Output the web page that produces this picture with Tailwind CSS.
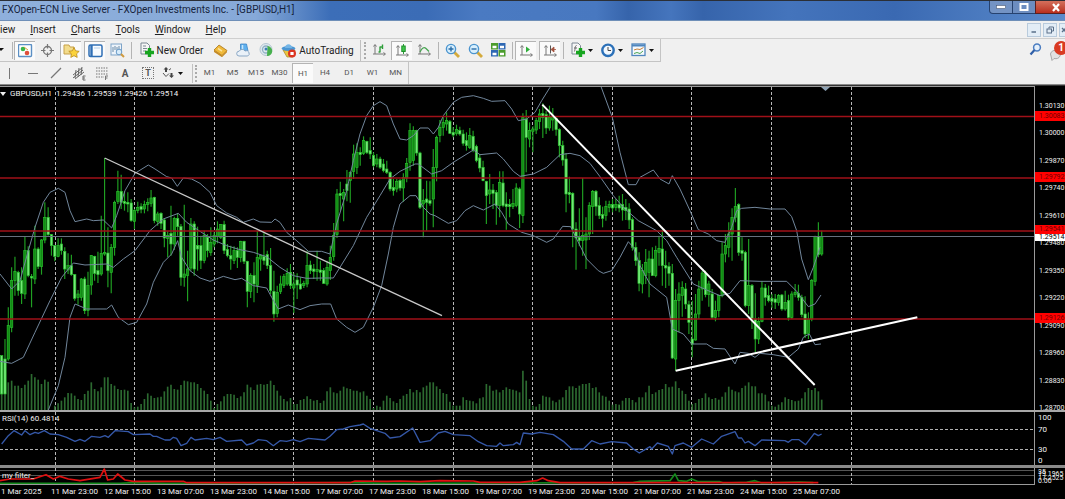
<!DOCTYPE html>
<html lang="en">
<head>
  <meta charset="UTF-8" />
  <meta name="viewport" content="width=device-width, initial-scale=1.0" />
  <title>FXOpen-ECN Live Server - [GBPUSD,H1]</title>
  <script src="https://cdn.jsdelivr.net/npm/@tailwindcss/browser@4"></script>
  <style>
    body { font-family: Roboto, "Noto Sans", sans-serif; }
    .tb > button { display: flex; align-items: center; justify-content: center; flex-shrink: 0; }
    .on { background: #fafafa; border-top: 1px solid #b4b4b4; border-left: 1px solid #b4b4b4; }
  </style>
</head>
<body class="bg-black text-[#222] h-screen flex flex-col overflow-hidden">

  <!-- title bar -->
  <header class="h-[21px] shrink-0 flex justify-between border-t border-[#2b2f36] border-b border-b-[#6f8fb8] bg-[linear-gradient(90deg,#8fb0dc_0,#86a9d8_24%,#3c6eb8_31%,#3b6cb6_40%,#4a7ac2_45%,#4878c0_56%,#3664ab_59%,#4575bd_63%,#3664ab_66%,#4474bc_74%,#3a69b2_84%,#5b8bcc_100%)]">
    <h1 class="text-[10px] leading-[17px] pl-0.5 whitespace-nowrap text-[#16243c]">FXOpen-ECN Live Server - FXOpen Investments Inc. - [GBPUSD,H1]</h1>
    <div class="flex h-[13px] shrink-0">
      <button aria-label="Minimize" class="w-6 border border-t-0 border-[#26426f] rounded-bl bg-[#7393c4] flex items-center justify-center"><svg width="10" height="5"><rect x=".5" y=".5" width="9" height="3" fill="#fff" stroke="#4b5a75" stroke-width=".6"/></svg></button>
      <button aria-label="Maximize" class="w-[22px] border-b border-[#26426f] bg-[#6c8dc0] flex items-center justify-center"><svg width="10" height="9"><rect x="1.5" y="1" width="7" height="6" fill="none" stroke="#fff" stroke-width="2"/></svg></button>
      <button aria-label="Close" class="w-[30px] border-l border-b border-[#5a2020] bg-linear-to-b from-[#d4705c] to-[#b82c1c] flex items-center justify-center pl-2.5"><svg width="10" height="9"><path d="M2 1l6 7M8 1L2 8" stroke="#fff" stroke-width="2.2"/></svg></button>
    </div>
  </header>

  <!-- menu -->
  <nav class="h-[18px] shrink-0 bg-[#f1f1f1] border-b border-[#cfcfcf] flex justify-between text-[10px] leading-[18px]">
    <div class="flex gap-[15px]">
      <a href="#">iew</a>
      <a href="#"><u>I</u>nsert</a>
      <a href="#"><u>C</u>harts</a>
      <a href="#"><u>T</u>ools</a>
      <a href="#"><u>W</u>indow</a>
      <a href="#"><u>H</u>elp</a>
    </div>
    <div class="flex gap-0.5 pt-0.5">
      <button aria-label="Minimize chart" class="w-3.5 h-3.5 border border-[#b9cbdc] bg-[#e3edf6] flex items-center justify-center"><svg width="8" height="8"><path d="M1.500 6h4.500" stroke="#5a6f88" stroke-width="1.5"/></svg></button>
      <button aria-label="Restore chart" class="w-3.5 h-3.5 border border-[#b9cbdc] bg-[#e3edf6] flex items-center justify-center"><svg width="8" height="8" fill="none" stroke="#5a6f88"><path d="M3 2.500V1h4.500v4H6"/><rect x="1" y="3" width="4.500" height="4"/></svg></button>
      <button aria-label="Close chart" class="w-1.5 h-3.5 border border-r-0 border-[#b9cbdc] bg-[#e3edf6] flex items-center"><svg width="5" height="8"><path d="M2 2l4 4M6 2L2 6" stroke="#5a6f88" stroke-width="1.300"/></svg></button>
    </div>
  </nav>

  <!-- toolbars -->
  <div class="shrink-0 bg-[#f0f0f0] border-b border-[#8a8a8a] flex justify-between">
    <div>
      <div class="tb h-[23px] flex items-center w-[661px] border-r border-b border-[#c4c4c4] text-[10px]">
        <svg class="shrink-0" width="11" height="6"><path d="M-2 1h6L1 4z" fill="#111"/></svg>
        <i class="w-px h-[17px] bg-[#b4b4b4] mx-px"></i>
        <button aria-label="Market Watch" class="on w-[21px] h-[19px]"><svg width="15" height="14"><rect x=".5" y=".5" width="13" height="12" rx="1" fill="#fff" stroke="#5b8fc4" stroke-width="1.400"/><circle cx="5" cy="5" r="2.300" fill="#3bb54a"/><circle cx="9" cy="9" r="2.300" fill="#e0503a"/><path d="M6 3l4 3" stroke="#d9a23a"/></svg></button>
        <button aria-label="Crosshair" class="w-[25px] h-[19px]"><svg width="15" height="15" fill="none" stroke="#777"><circle cx="7.500" cy="7.500" r="4" stroke-width="1.300"/><path d="M7.500 1v4.500M7.500 9.500V14M1 7.500h4.500M9.500 7.500H14" stroke-width="1.200"/></svg></button>
        <button aria-label="Navigator" class="on w-[21px] h-[19px]"><svg width="17" height="16"><path d="M1 3V2h5l1 2h4v7H1z" fill="#f3dc8c" stroke="#c7a14a"/><path d="M11 4.500l1.600 3.300 3.600.5-2.600 2.500.6 3.600L11 12.700l-3.200 1.700.6-3.600L5.800 8.300l3.600-.5z" fill="#fbd33c" stroke="#b98a1e" stroke-width=".8"/></svg></button>
        <button aria-label="Terminal" class="on w-[21px] h-[19px] ml-[3px]"><svg width="15" height="14"><rect x="1" y="1" width="13" height="11.500" rx="1.500" fill="#f7fbff" stroke="#2f6fb5" stroke-width="1.500"/><path d="M3.500 1v11.500" stroke="#2f6fb5" stroke-width="2.400"/><path d="M6 4h6" stroke="#b8cfe6"/></svg></button>
        <button aria-label="Strategy Tester" class="w-[25px] h-[19px]"><svg width="15" height="15" fill="none"><rect x="1" y="1" width="10.500" height="11" fill="#eef4fa" stroke="#7ea4c8"/><path d="M3 9V4M5 7V3M7 9V4M9 7V3" stroke="#6b8ba8"/><circle cx="9" cy="9" r="2.800" fill="#d7ecfb" stroke="#6b9cc9"/><path d="M11 11l3 3" stroke="#d09a3e" stroke-width="2"/></svg></button>
        <i class="w-px h-[17px] bg-[#b4b4b4] mx-px"></i>
        <button class="w-[76px] h-[19px] gap-0.5 whitespace-nowrap"><svg class="shrink-0" width="16" height="16"><path d="M2 1h6l2.500 2.500V12H2z" fill="#f6f6f6" stroke="#7d8894"/><path d="M4 4h3M4 6.500h4M4 9h3" stroke="#7d8894"/><path d="M10.500 6v9M6 10.500h9" stroke="#17a51f" stroke-width="3.400"/></svg>New Order</button>
        <button aria-label="MetaEditor" class="w-[23px] h-[19px]"><svg width="15" height="14"><path d="M1 7l5-5 8 5.500-5 5z" fill="#f0b93a" stroke="#a8751c" stroke-width=".8"/><path d="M1 7v2l8 5.200 5-5V7.500l-5 5z" fill="#c58a24"/><path d="M5 5.500l4 2.600" stroke="#fbe39a" stroke-width="1.500"/></svg></button>
        <button aria-label="MQL Community" class="w-[23px] h-[19px]"><svg width="15" height="14"><path d="M4.500 1h6l1.500 7H4.500z" fill="#5fb0ee" stroke="#3d84c4" stroke-width=".8"/><path d="M6.500 2v5" stroke="#c7e6fb" stroke-width="1.500"/><path d="M3 13a2.400 2.400 0 01.2-4.800A3.300 3.300 0 019 8a2.600 2.600 0 012.700 5z" fill="#eaf1f8" stroke="#7f9fc0" stroke-width=".9"/></svg></button>
        <button aria-label="Signals" class="w-[23px] h-[19px]"><svg width="15" height="14" fill="none"><circle cx="7" cy="6.500" r="6" fill="#dfe9ef" stroke="#b4c6d2"/><circle cx="7" cy="6.500" r="3.500" stroke="#8fb0c5" stroke-width="1.300"/><path d="M8.500 3A5 5 0 018 13z" fill="#47b04e"/><circle cx="7" cy="6" r="1.500" fill="#3b7fb5"/></svg></button>
        <button class="w-[79px] h-[19px] gap-0.5 whitespace-nowrap"><svg class="shrink-0" width="16" height="15"><path d="M2 7l4 7h6l2-7z" fill="#e9c440" stroke="#a78423" stroke-width=".7"/><ellipse cx="7.500" cy="5.500" rx="6.800" ry="2.500" fill="#4b97d4"/><path d="M4 5c0-5 7-5 7 0z" fill="#74b5e6"/><circle cx="11" cy="10.500" r="4" fill="#dc3420"/><rect x="9.400" y="9" width="3.200" height="3" fill="#fff"/></svg>AutoTrading</button>
        <i class="w-px h-[21px] bg-[#c0c0c0] ml-[3px]"></i>
        <i class="h-[17px] border-l-2 border-dotted border-[#aaa] ml-[3px] mr-0.5"></i>
        <button aria-label="Bar Chart" class="w-[23px] h-[19px]"><svg width="15" height="14" fill="none" stroke="#777"><path d="M3 2v9M1 11h12M1.500 3.500L3 1.500l1.500 2M11.500 9.500l2 1.500-2 1.500"/><path d="M8 3.500v6M6.500 9H8M8 4h3M10.500 1.500V6" stroke="#2e9e3a" stroke-width="1.400"/></svg></button>
        <button aria-label="Candlesticks" class="on w-[21px] h-[19px]"><svg width="15" height="14" fill="none" stroke="#777"><path d="M3 2v9M1 11h12M1.500 3.500L3 1.500l1.500 2M11.500 9.500l2 1.500-2 1.500"/><path d="M8.500 0v10" stroke="#2e9e3a"/><rect x="6.800" y="2" width="3.400" height="5.500" fill="#3fc64b" stroke="#1f8f2b"/></svg></button>
        <button aria-label="Line Chart" class="w-[25px] h-[19px]"><svg width="15" height="14" fill="none" stroke="#777"><path d="M3 2v9M1 11h12M1.500 3.500L3 1.500l1.500 2M11.500 9.500l2 1.500-2 1.500"/><path d="M3 9c2-4 4-5.500 6-3.500l3 3" stroke="#4aa553" stroke-width="1.300"/></svg></button>
        <i class="w-px h-[17px] bg-[#b4b4b4] mx-px"></i>
        <button aria-label="Zoom In" class="w-6 h-[19px]"><svg width="15" height="15" fill="none"><path d="M9 9l5 5" stroke="#d4aa3c" stroke-width="2.800"/><circle cx="6" cy="6" r="4.600" fill="#d8effd" stroke="#4a94cf" stroke-width="1.400"/><path d="M6 3.500v5M3.500 6h5" stroke="#2a6ea8" stroke-width="1.400"/></svg></button>
        <button aria-label="Zoom Out" class="w-[23px] h-[19px]"><svg width="15" height="15" fill="none"><path d="M9 9l5 5" stroke="#d4aa3c" stroke-width="2.800"/><circle cx="6" cy="6" r="4.600" fill="#d8effd" stroke="#4a94cf" stroke-width="1.400"/><path d="M3.500 6h5" stroke="#2a6ea8" stroke-width="1.400"/></svg></button>
        <button aria-label="Tile Windows" class="w-[23px] h-[19px]"><svg width="15" height="14"><rect width="7" height="6.500" y="0" fill="#4b9c2c"/><rect x="7.500" width="7" height="6.500" fill="#2e68b4"/><rect y="7" width="7" height="6.500" fill="#2e68b4"/><rect x="7.500" y="7" width="7" height="6.500" fill="#4b9c2c"/><path d="M1.500 4h4M9 4h4M1.500 11h4M9 11h4" stroke="#fff" stroke-width="2.400"/></svg></button>
        <i class="w-px h-[17px] bg-[#b4b4b4] mx-[2px]"></i>
        <button aria-label="Auto Scroll" class="on w-[21px] h-[19px]"><svg width="15" height="14" fill="none" stroke="#777"><path d="M3 2v9M1 11h12M1.500 3.500L3 1.500l1.500 2M11.500 9.500l2 1.500-2 1.500"/><path d="M7 2.500v6L11 5.500z" fill="#2fae3b" stroke="none"/></svg></button>
        <button aria-label="Chart Shift" class="on w-[21px] h-[19px] ml-[3px]"><svg width="15" height="14" fill="none" stroke="#777"><path d="M3 2v9M1 11h12M1.500 3.500L3 1.500l1.500 2M11.500 9.500l2 1.500-2 1.500"/><path d="M7.500 1.500v8" stroke="#555"/><path d="M8 5.500L11 3v5zM11 5.500h2" fill="#a2503c" stroke="#a2503c" stroke-width=".8"/></svg></button>
        <i class="w-px h-[17px] bg-[#b4b4b4] mx-[3px]"></i>
        <button aria-label="Indicators" class="w-[30px] h-[19px] gap-0.5"><svg width="16" height="16"><path d="M2 1h6l2.500 2.500V12H2z" fill="#f6f6f6" stroke="#7d8894"/><path d="M6.500 3.500c-2 0-1 6-2.500 6M4 6h3" stroke="#666" fill="none"/><path d="M10.500 6v9M6 10.500h9" stroke="#17a51f" stroke-width="3.400"/></svg><svg width="6" height="5"><path d="M0 1h5L2.500 4z" fill="#111"/></svg></button>
        <button aria-label="Periods" class="w-[30px] h-[19px] gap-0.5"><svg width="16" height="15"><circle cx="8" cy="7.300" r="5.700" fill="#f2f8fe" stroke="#2b70b8" stroke-width="2.400"/><path d="M8 4v3.500h3" stroke="#444" fill="none"/></svg><svg width="6" height="5"><path d="M0 1h5L2.500 4z" fill="#111"/></svg></button>
        <button aria-label="Templates" class="w-[31px] h-[19px] gap-0.5"><svg width="16" height="14" fill="none"><rect x="1" y="1" width="13" height="11.500" fill="#f5f9fd" stroke="#4f86be" stroke-width="1.300"/><path d="M1 2.500h13" stroke="#4f86be" stroke-width="2"/><path d="M3 7l3-1 3 .5 3.500-2" stroke="#c78038"/><path d="M3 10.500l3-1 3 1 3-2.500" stroke="#4aa553"/></svg><svg width="6" height="5"><path d="M0 1h5L2.500 4z" fill="#111"/></svg></button>
      </div>

      <div class="tb h-[22px] flex items-center w-[409px] border-r border-[#c4c4c4] text-[8px] text-[#555]">
        <button aria-label="Vertical Line" class="w-[19px] h-5"><svg width="3" height="11"><path d="M1.500 0v11" stroke="#777"/></svg></button>
        <button aria-label="Horizontal Line" class="w-[27px] h-5"><svg width="12" height="3"><path d="M1 1.500h10" stroke="#777"/></svg></button>
        <button aria-label="Trendline" class="w-5 h-5"><svg width="12" height="12"><path d="M1 11L11 1" stroke="#777" stroke-width="1.200"/></svg></button>
        <button aria-label="Equidistant Channel" class="w-[26px] h-5"><svg width="15" height="15" fill="none" stroke="#666"><path d="M1 9l9-7M1 12l10-8M3 13l9-7M4 4l-1 8M7 2L6 11M10 1L9 9"/><path d="M13.500 10H11v4h2.500M11 12h2"/></svg></button>
        <button aria-label="Fibonacci" class="w-5 h-5"><svg width="14" height="15" fill="none" stroke="#777"><path d="M1 2h12M1 5h12M1 8h12M1 11h8" stroke-dasharray="1.500 1"/><path d="M10.500 14v-4H13M10.500 12h2"/></svg></button>
        <button aria-label="Text" class="w-[26px] h-5 text-[10px] font-bold">A</button>
        <button aria-label="Text Label" class="w-5 h-5 text-[9px] font-bold"><span class="border border-dotted border-[#777] w-3 h-3 leading-[10px]">T</span></button>
        <button aria-label="Arrows" class="w-[30px] h-5 gap-[3px]"><svg width="13" height="12" fill="#444"><path d="M4 0l2.500 2.500H5V5H3V2.500H1.500zM9.500 11L7 8.500h1.500V6h2v2.500H12z"/><path d="M1 6l3 3.500 3-3M7 3l2-1.500" fill="none" stroke="#555"/></svg><svg width="6" height="5"><path d="M0 1h5L2.500 4z" fill="#111"/></svg></button>
        <i class="w-px h-[19px] bg-[#c0c0c0] ml-1"></i>
        <i class="h-[17px] border-l-2 border-dotted border-[#aaa] ml-0.5 mr-px"></i>
        <button class="w-[23px] h-5">M1</button>
        <button class="w-[23px] h-5">M5</button>
        <button class="w-6 h-5">M15</button>
        <button class="w-[23px] h-5">M30</button>
        <button class="on w-[21px] h-5 ml-px">H1</button>
        <button class="w-6 h-5">H4</button>
        <button class="w-6 h-5">D1</button>
        <button class="w-[23px] h-5">W1</button>
        <button class="w-[23px] h-5">MN</button>
      </div>
    </div>
    <div class="flex pt-1 gap-[7px]">
      <button aria-label="Search" class="self-start"><svg width="13" height="13" fill="none"><circle cx="8" cy="4.500" r="3.400" fill="#e5f0fb" stroke="#4a7cc0" stroke-width="1.500"/><path d="M5.500 7L1.500 11.500" stroke="#2f5fa8" stroke-width="2.200"/></svg></button>
      <button class="self-start relative w-4 h-5" aria-label="Notifications">
        <svg width="14" height="18"><path d="M2 12a5 4 0 119 0 5 4 0 01-6 2.500L3 16.500z" fill="#e2e2e2" stroke="#aaa"/></svg>
        <span class="absolute -top-0.5 left-[5px] w-3.5 h-3.5 rounded-full bg-[#d93a22] text-white text-[10px] leading-[14px] font-bold">1</span>
      </button>
    </div>
  </div>

  <!-- chart window -->
  <main class="flex-1 min-h-0 flex flex-col border-t border-[#333] text-[#f0f0f0] text-[8px] leading-[8px] whitespace-nowrap">
    <section class="flex-1 min-h-0 flex border-b-2 border-[#a8a8a8]">
      <div class="relative flex-1 min-w-0 border-t border-r border-[#9a9a9a]">
        <svg id="price" class="absolute inset-0 w-full h-full"></svg>
        <p class="absolute top-[3px] left-0 flex gap-[3px]"><svg width="7" height="8"><path d="M0 2h6L3 6z" fill="#eee"/></svg><span>GBPUSD,H1&nbsp; 1.29436 1.29539 1.29426 1.29514</span></p>
      </div>
      <div class="relative w-[30px] overflow-hidden text-[7px]">
        <ul class="flex flex-col justify-between h-[310px] mt-4 pl-1">
          <li>1.30130</li><li>1.30000</li><li>1.29870</li><li>1.29740</li><li>1.29610</li><li>1.29480</li><li>1.29350</li><li>1.29220</li><li>1.29090</li><li>1.28960</li><li>1.28830</li><li>1.28700</li>
        </ul>
        <b class="absolute left-0 top-[25px] w-full h-[10px] bg-[#f00] text-[#700000] font-normal leading-[10px] pl-1">1.30083</b>
        <b class="absolute left-0 top-[86px] w-full h-[10px] bg-[#f00] text-[#700000] font-normal leading-[10px] pl-1">1.29792</b>
        <b class="absolute left-0 top-[147px] w-full h-[8px] bg-white text-black font-normal leading-[8px] pl-1">1.29514</b>
        <b class="absolute left-0 top-[139px] w-full h-[9px] bg-[#f00] text-[#700000] font-normal leading-[9px] pl-1">1.29541</b>
        <b class="absolute left-0 top-[227px] w-full h-[10px] bg-[#f00] text-[#700000] font-normal leading-[10px] pl-1">1.29126</b>
      </div>
    </section>

    <section class="h-[56px] shrink-0 flex border-b-[3px] border-[#8a8a8a]">
      <div class="relative flex-1 min-w-0 border-r border-[#9a9a9a]">
        <svg id="rsi" class="absolute inset-0 w-full h-full"></svg>
        <p class="absolute top-[3px] left-0.5">RSI(14) 60.4814</p>
      </div>
      <div class="w-[30px] pl-[3px] pt-0.5 flex flex-col">
        <span class="h-3">100</span><span class="h-[20px]">70</span><span class="h-[11px]">30</span><span>0</span>
      </div>
    </section>

    <section class="h-[17px] shrink-0 flex">
      <div class="relative flex-1 min-w-0 border-r border-b border-[#9a9a9a]">
        <svg id="filter" class="absolute inset-0 w-full h-full"></svg>
        <p class="absolute top-1 left-0.5">my filter_</p>
      </div>
      <div class="relative w-[30px] overflow-hidden pl-[3px] text-[7px]">
        <span class="absolute top-0">35</span><span class="absolute top-[2px]">19.1965</span><span class="absolute top-[6px]">17.2525</span><span class="absolute top-[9px]">0.00</span>
      </div>
    </section>

    <footer class="h-[14px] shrink-0 flex pl-px pt-[3px]">
      <span class="w-[50px] shrink-0">1 Mar 2025</span>
      <span class="w-[53px] shrink-0">11 Mar 23:00</span>
      <span class="w-[53px] shrink-0">12 Mar 15:00</span>
      <span class="w-[53px] shrink-0">13 Mar 07:00</span>
      <span class="w-[53px] shrink-0">13 Mar 23:00</span>
      <span class="w-[53px] shrink-0">14 Mar 15:00</span>
      <span class="w-[53px] shrink-0">17 Mar 07:00</span>
      <span class="w-[53px] shrink-0">17 Mar 23:00</span>
      <span class="w-[53px] shrink-0">18 Mar 15:00</span>
      <span class="w-[53px] shrink-0">19 Mar 07:00</span>
      <span class="w-[53px] shrink-0">19 Mar 23:00</span>
      <span class="w-[53px] shrink-0">20 Mar 15:00</span>
      <span class="w-[53px] shrink-0">21 Mar 07:00</span>
      <span class="w-[53px] shrink-0">21 Mar 23:00</span>
      <span class="w-[53px] shrink-0">24 Mar 15:00</span>
      <span class="w-[53px] shrink-0">25 Mar 07:00</span>
    </footer>
  </main>

  <script>
    // one candle per entry: high, low, body top, body bottom, 1 = rising (units: 1/3 px)
    const candles = `815,930,815,930,0 765,930,825,930,0 670,830,725,825,1 550,745,590,730,1 518,635,562,590,1 560,635,565,620,0 550,660,590,628,0 458,645,500,630,1 487,580,500,575,0 570,670,577,582,0
425,600,495,585,1 490,555,495,548,0 465,572,468,548,1 355,478,400,468,1 370,455,400,452,0 450,515,452,485,0 485,532,485,517,0 463,520,485,517,1 463,512,480,500,0 490,585,502,555,0
508,570,545,558,1 512,575,545,572,0 570,650,572,643,0 618,662,630,640,1 582,650,585,640,1 578,690,585,680,0 563,697,605,680,1 513,632,515,603,1 515,590,517,568,0 503,597,560,572,0
395,575,508,570,1 222,515,505,510,1 430,610,507,560,0 480,628,490,565,1 350,515,355,490,1 260,360,322,352,1 272,375,322,355,0 322,380,352,358,0 325,385,355,360,0 345,413,357,410,0
375,435,380,412,1 353,388,370,380,1 358,388,368,376,0 350,388,362,375,1 343,382,355,362,1 318,368,342,358,1 338,418,340,410,0 383,425,390,412,1 385,435,388,418,0 405,490,408,462,0
442,520,455,463,1 365,515,448,480,0 398,498,403,480,1 388,455,403,428,0 420,605,428,580,0 362,608,570,580,1 500,652,555,575,1 402,560,420,552,1 412,575,420,555,0 428,560,485,495,0
455,555,485,530,0 440,538,455,530,1 450,520,460,500,0 430,515,475,505,1 445,490,455,480,1 412,478,435,458,1 420,465,422,460,1 410,510,422,500,0 480,520,497,515,0 485,557,515,525,0
487,540,500,530,1 490,552,500,520,0 470,535,472,520,1 470,540,472,532,0 530,670,532,622,0 568,642,575,622,1 535,655,575,600,0 440,627,520,605,1 512,560,515,525,1 448,542,518,530,0
500,555,512,545,0 492,630,545,620,0 560,713,622,690,0 605,700,625,688,1 575,630,600,622,1 570,612,578,605,1 553,605,568,600,1 540,615,565,605,0 568,687,600,612,1 568,645,588,603,0
580,617,600,615,0 590,612,598,605,1 502,610,545,600,1 530,570,543,560,0 540,585,555,562,0 500,590,556,562,1 530,590,558,565,0 552,600,560,598,0 530,605,550,600,1 485,588,520,560,1
417,530,455,518,1 315,462,330,452,1 293,380,328,335,0 315,412,325,345,1 258,352,300,320,0 262,356,265,290,1 182,285,210,262,1 178,270,205,250,1 190,245,205,212,0 157,213,170,208,1
170,210,172,206,0 160,225,200,210,0 205,250,215,245,0 210,250,225,240,1 218,255,225,250,0 225,265,240,260,0 230,270,255,265,0 262,322,265,315,0 285,335,310,320,0 285,325,292,315,1
285,320,290,312,0 268,353,280,312,1 222,295,238,282,1 118,260,140,235,1 127,245,140,230,1 137,215,140,207,0 203,375,207,370,0 315,460,350,360,1 290,440,345,355,0 292,365,350,358,0
195,430,250,345,1 155,292,160,250,1 108,175,130,155,1 97,155,115,130,1 85,140,110,120,1 108,150,113,148,0 130,160,145,153,0 122,155,137,148,1 128,155,140,150,0 137,185,150,178,0
145,200,170,185,0 132,195,155,190,1 140,205,157,198,0 182,235,187,230,0 210,265,222,252,0 230,292,250,290,0 290,420,292,335,0 270,360,318,330,1 300,375,318,328,0 318,422,325,365,0
262,400,295,365,1 262,370,297,365,0 325,437,360,368,0 345,400,362,368,0 315,375,358,368,1 298,370,312,365,1 310,432,315,390,0 88,417,100,395,1 78,265,105,160,0 115,190,140,165,1
127,205,135,142,1 102,150,110,138,1 75,135,90,112,1 58,162,88,100,0 80,150,92,132,0 65,140,100,132,1 72,140,98,108,1 100,155,103,137,0 133,220,137,185,0 170,245,185,228,0
207,385,225,330,0 278,358,325,332,0 325,490,328,435,0 415,557,435,462,0 373,487,460,470,0 282,515,455,470,1 400,555,450,468,1 355,468,365,450,1 318,450,322,368,1 318,395,322,367,0
340,405,365,395,0 368,430,392,403,0 350,410,367,395,1 350,385,362,370,1 345,385,362,372,0 345,380,362,370,1 335,385,362,372,0 330,410,362,378,0 345,408,370,380,0 358,435,375,408,0
400,500,407,490,0 475,545,490,530,0 505,622,530,598,0 540,628,560,600,1 495,600,535,575,1 500,640,525,565,1 490,575,525,575,0 485,580,500,575,1 455,545,493,505,1 437,605,495,545,0
500,612,545,552,0 535,605,548,568,0 540,825,568,822,0 615,860,650,825,1 595,745,630,650,1 592,698,610,635,1 597,675,615,660,0 650,750,662,715,0 650,820,765,780,0 630,770,690,768,1
590,705,615,690,1 560,650,567,615,1 560,640,568,632,0 590,668,600,632,1 615,705,630,700,0 650,712,680,700,1 632,700,635,680,1 475,640,510,635,1 450,535,485,510,1 415,520,450,490,1
373,530,400,450,1 312,415,368,400,1 358,515,362,505,0 460,530,500,508,0 500,670,505,665,0 465,690,605,665,1 600,735,605,705,0 628,805,705,765,0 700,780,712,765,1 592,715,612,712,1
600,665,612,640,0 605,655,635,650,0 630,672,643,652,0 630,675,645,655,0 630,665,635,655,1 630,680,633,675,0 620,680,655,675,1 632,710,650,700,0 622,705,630,700,1 600,640,625,632,1
602,650,628,640,0 632,700,640,692,0 637,762,690,750,0 685,765,705,748,1 585,712,590,705,1 455,605,458,592,1 415,520,458,512,0 440,515,458,510,1`.split(/\s+/).map(c => c.split(',').map(Number));

    // top of each volume bar, same units
    const volumes = [900,895,895,890,905,905,912,902,890,870,880,887,900,887,893,978,965,958,950,940,927,928,935,945,948,930,920,895,915,922,910,880,880,900,905,915,918,917,920,957,
      970,968,960,945,928,935,942,940,938,922,908,902,915,917,903,890,892,895,895,900,912,920,930,950,972,960,952,937,930,930,932,942,937,925,902,910,918,902,900,902,
      900,890,903,920,935,945,952,942,960,960,948,945,937,945,950,948,957,950,922,910,925,928,920,908,913,915,920,920,925,922,935,945,972,965,968,950,935,942,952,957,
      945,935,930,915,925,918,925,910,905,895,895,907,915,927,930,953,965,965,965,940,948,950,952,958,943,940,900,905,920,917,925,918,910,915,917,920,925,860,890,945,
      965,968,960,935,938,940,950,955,947,940,918,907,907,912,905,900,900,897,912,910,925,935,938,950,962,960,962,950,942,942,948,955,940,940,925,905,930,925,918,915,
      900,910,908,892,912,920,930,950,960,957,945,942,928,940,945,942,947,938,925,908,917,922,925,912,905,895,907,907,928,928,932,952,965,968,962,955,940,945,948,952,
      950,943,925,912,918,912,922,947];

    const bands = [
      '0,570 35,615 60,590 85,500 105,430 130,355 150,325 175,313 195,325 210,380 225,413 260,405 280,410 310,408 335,432 350,395 375,320 405,268 445,243 465,255 500,278 515,282 532,307 550,282 575,285 600,298 630,325 650,365 680,387 710,400 730,415 760,405 780,414 815,415 825,405 840,415 860,445 890,470 925,502 965,502 990,510 1010,420 1040,320 1060,230 1080,150 1100,95 1120,65 1140,53 1160,65 1180,120 1200,165 1220,168 1240,155 1260,132 1285,132 1300,150 1315,130 1330,95 1360,55 1385,40 1420,35 1450,43 1475,52 1515,50 1535,75 1555,110 1580,105 1605,85 1625,50 1650,10 1670,-40 1785,-40 1802,5 1837,100 1860,205 1885,302 1908,302 1920,280 1960,258 1980,285 2007,300 2017,275 2040,315 2070,380 2095,437 2125,450 2150,470 2175,475 2195,430 2210,380 2225,373 2265,370 2310,375 2355,375 2375,398 2390,440 2405,525 2425,587 2440,550 2460,490',
      '0,832 35,838 70,820 105,745 150,650 185,580 220,537 255,543 320,540 340,550 370,525 405,500 450,440 490,405 535,388 560,415 600,442 640,468 680,485 720,497 760,505 800,518 840,550 880,575 920,583 970,582 1000,582 1020,550 1060,485 1100,400 1140,335 1170,285 1200,262 1245,240 1255,240 1295,270 1325,260 1360,235 1420,198 1440,212 1490,207 1510,225 1540,262 1560,277 1600,270 1640,250 1680,212 1710,208 1740,215 1770,238 1800,278 1840,335 1870,370 1915,410 1970,440 2000,470 2030,520 2080,600 2120,618 2160,635 2190,628 2220,590 2280,592 2320,592 2360,592 2390,622 2425,668 2445,660 2463,633',
      '145,978 175,905 195,820 210,700 225,660 260,675 320,675 335,663 355,700 385,722 410,715 440,660 460,595 490,535 515,510 533,470 545,520 570,560 600,582 630,592 670,577 705,587 725,583 760,605 800,612 815,640 835,675 865,663 900,677 930,665 965,660 992,660 1010,705 1040,730 1065,745 1090,730 1120,670 1145,605 1165,510 1180,430 1200,360 1230,335 1248,335 1270,370 1290,390 1305,395 1345,418 1370,410 1395,380 1420,365 1450,378 1485,360 1505,385 1525,420 1565,445 1600,455 1640,475 1660,465 1688,427 1712,428 1730,465 1760,525 1795,560 1810,568 1835,560 1860,520 1885,473 1900,490 1920,545 1950,600 2000,640 2017,735 2050,750 2075,780 2120,780 2140,793 2175,795 2205,840 2220,805 2245,808 2265,820 2280,808 2320,812 2365,820 2395,795 2410,760 2428,750 2445,782 2463,780'
    ];

    const rsi = '5,120 25,95 42,80 65,93 75,80 90,92 105,85 115,88 133,80 150,90 175,92 200,100 225,112 240,106 255,112 275,97 300,100 315,95 325,100 345,80 385,83 400,92 450,90 460,97 470,97 495,108 510,108 520,100 530,103 543,125 560,118 573,100 585,108 620,103 640,107 660,100 680,112 725,108 740,123 760,117 775,107 800,110 820,125 840,110 860,112 880,107 900,113 925,103 975,108 990,97 1010,77 1030,75 1050,68 1080,63 1090,60 1110,73 1155,88 1170,102 1200,98 1238,72 1260,115 1290,110 1315,87 1335,82 1360,92 1410,95 1435,113 1460,125 1490,127 1500,117 1510,125 1540,122 1550,115 1560,122 1570,87 1595,90 1620,85 1660,92 1690,112 1715,135 1750,135 1775,110 1800,120 1835,113 1880,117 1900,135 1918,147 1950,128 1955,135 1972,117 2005,127 2017,150 2025,125 2050,117 2075,130 2105,105 2140,120 2165,97 2205,83 2215,102 2225,102 2235,117 2245,112 2265,125 2285,108 2355,110 2365,115 2375,107 2397,107 2417,122 2443,88 2455,95 2465,90';
    const red = '0,230 30,225 100,225 115,220 138,212 160,225 180,217 205,225 240,230 300,220 313,195 323,228 340,225 353,210 375,228 400,232 550,232 560,236 1050,236 1065,231 1160,232 1200,231 1260,233 1320,230 1420,231 1440,235 1560,235 1610,230 1628,222 1645,230 1680,236 2455,236';
    const green = '0,238 360,238 400,236 500,238 1050,236 1160,238 1900,236 1920,232 2010,230 2025,210 2035,230 2060,232 2075,225 2095,233 2160,233 2170,237 2240,235 2265,230 2285,237 2400,234 2440,236';

    // day separators, every 24 bars
    let grid = '';
    for (let x = 55; x < 900; x += 79.6) {
      grid += `<path d="M${Math.floor(x) + .5} 0V999" stroke="#b8b8b8" stroke-dasharray="3 2"/>`;
    }
    const hline = (y, color, extra = '') => `<line x1="0" x2="100%" y1="${y}" y2="${y}" stroke="${color}" ${extra}/>`;
    const line = (pts, color, w) => `<polyline points="${pts}" fill="none" stroke="${color}" stroke-width="${w}" stroke-linejoin="round"/>`;
    const scaled = (dy, body) => `<g transform="translate(0 ${dy}) scale(.33333)">${body}</g>`;

    const x = i => 5 + i * 9.96;
    const vol = volumes.map((v, i) => `<path d="M${x(i)} 980V${v}" stroke="#2c6a30" stroke-width="5"/>`).join('');
    const bars = candles.map(([h, l, t, b, up], i) =>
      `<path d="M${x(i)} ${h}V${l}" stroke="#1fa022" stroke-width="3.500"/>` +
      `<rect x="${x(i) - 3.5}" y="${t}" width="7" height="${Math.max(b - t, 4)}" fill="${up ? '#128a14' : '#74e878'}" stroke="#28c02c" stroke-width="2"/>`).join('');

    const levels = [29.5, 91, 144, 232].map(y => hline(y, '#a01018', 'stroke-width="1.500"')).join('');

    document.getElementById('price').innerHTML = grid +
      scaled(-3, vol + bars + bands.map(b => line(b, '#71879c', 3)).join('')) +
      levels + hline(149.5, '#66707e') +
      scaled(-3, line('314,222 1326,695', '#c8c8c8', 4) + line('1627,62 2444,903', '#fff', 6) + line('2027,860 2752,700', '#fff', 6)) +
      `<path d="M821 0h9l-4.500 4z" fill="#8ea2b4"/>`;

    document.getElementById('rsi').innerHTML = grid +
      hline(17.5, '#b0b0b0', 'stroke-dasharray="3 2"') + hline(37.5, '#b0b0b0', 'stroke-dasharray="3 2"') +
      scaled(-8, line(rsi, '#3558a8', 4));

    document.getElementById('filter').innerHTML = hline(2.5, '#555') + hline(7.5, '#555') + grid +
      scaled(-64, line(green, '#148a1c', 5) + line(red, '#e01010', 5));
  </script>
</body>
</html>
